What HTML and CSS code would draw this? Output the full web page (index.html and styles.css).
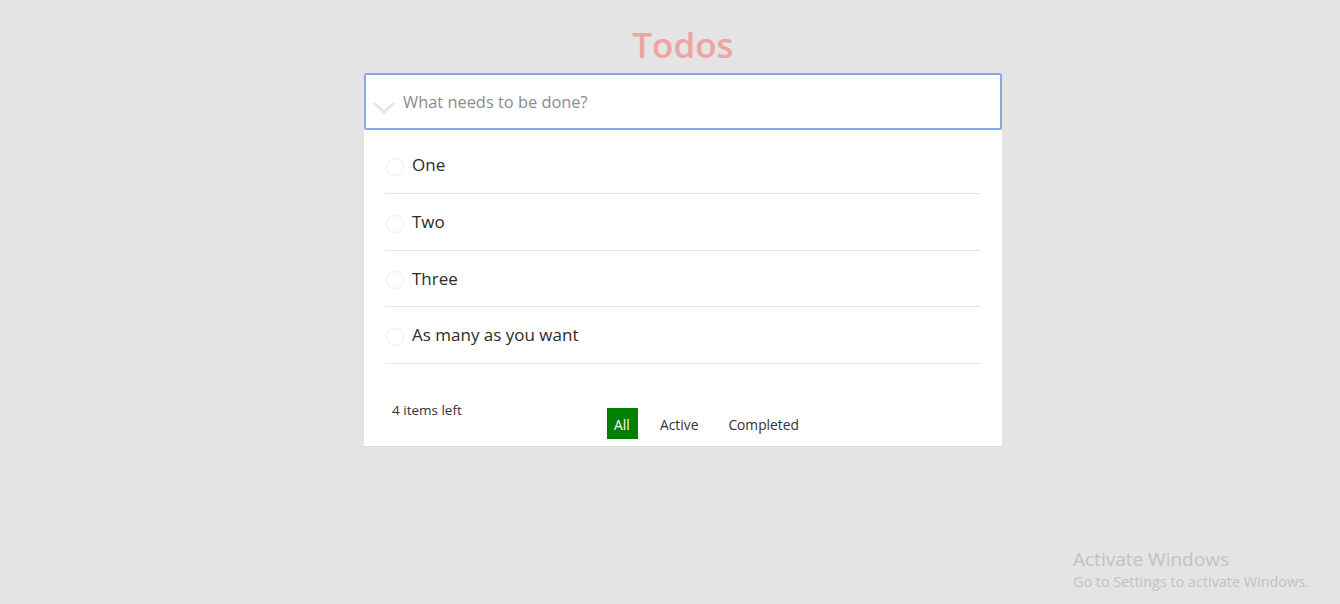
FILE: index.html
```html
<!DOCTYPE html>
<html lang="en">
<head>
<meta charset="utf-8">
<title>Todos</title>
<link rel="stylesheet" href="styles.css">
</head>
<body>
<main class="app">
  <h1 class="title">Todos</h1>
  <section class="card">
    <div class="entry">
      <svg class="toggle-all" width="24" height="16" viewBox="0 0 24 16"><path d="M2 3 L12 12 L22 3" fill="none" stroke="#e6e6e6" stroke-width="3"/></svg>
      <input class="new-todo" type="text" placeholder="What needs to be done?">
    </div>
    <ul class="list">
      <li class="item"><span class="check"></span><span class="label">One</span></li>
      <li class="item"><span class="check"></span><span class="label">Two</span></li>
      <li class="item short"><span class="check"></span><span class="label">Three</span></li>
      <li class="item"><span class="check"></span><span class="label">As many as you want</span></li>
    </ul>
    <footer class="footer">
      <span class="count">4 items left</span>
      <div class="filters">
        <a class="filter selected">All</a>
        <a class="filter">Active</a>
        <a class="filter">Completed</a>
      </div>
    </footer>
  </section>
</main>
<div class="watermark">
  <div class="wm-title">Activate Windows</div>
  <div class="wm-sub">Go to Settings to activate Windows.</div>
</div>
</body>
</html>
```
FILE: styles.css
```css
html, body {
  margin: 0;
  height: 100%;
}
body {
  background: #e4e4e4;
  font-family: "Open Sans", "Noto Sans", sans-serif;
  color: #333;
  overflow: hidden;
}
.app {
  width: 638px;
  margin: 0 auto;
  padding-left: 26px;
}
.title {
  margin: 0;
  padding-top: 22px;
  height: 73px;
  box-sizing: border-box;
  text-align: center;
  font-size: 35px;
  font-weight: 600;
  line-height: 46px;
  color: #efa3a3;
}
.card {
  background: #fff;
  border-bottom: 1px solid #d9d9d9;
}
.entry {
  display: flex;
  align-items: center;
  height: 57px;
  box-sizing: border-box;
  border: 2px solid #87a8ea;
  border-radius: 2px;
  background: #fff;
}
.toggle-all {
  margin-left: 6px;
  margin-top: 12px;
  flex: none;
}
.new-todo {
  flex: 1;
  border: none;
  outline: none;
  margin-left: 7px;
  padding: 0;
  font-family: inherit;
  font-size: 16.4px;
  color: #333;
  background: transparent;
}
.new-todo::placeholder {
  color: #8c8c8c;
}
.list {
  list-style: none;
  margin: 7px 22px 0;
  padding: 0;
}
.item {
  display: flex;
  align-items: center;
  height: 57px;
  border-bottom: 1px solid #e3e3e3;
  padding-bottom: 1px;
  box-sizing: border-box;
}
.item.short {
  height: 56px;
}
.check {
  width: 16px;
  height: 16px;
  border: 1px solid #ececec;
  border-radius: 50%;
  margin-top: 4px;
  flex: none;
}
.label {
  margin-left: 8px;
  font-size: 17px;
  color: #2b2b2b;
}
.footer {
  display: flex;
  height: 82px;
  padding-left: 28px;
  box-sizing: border-box;
}
.count {
  flex: 0 0 215px;
  font-size: 13.5px;
  margin-top: 37px;
  color: #333;
}
.filters {
  display: flex;
  align-self: flex-end;
  margin-bottom: 7px;
}
.filter {
  display: block;
  padding: 0 8px;
  height: 31px;
  line-height: 33px;
  font-size: 13.8px;
  color: #333;
}
.filter + .filter {
  margin-left: 14px;
}
.filter.selected {
  background: #008000;
  color: #fff;
  padding: 0 7px;
  min-width: 17px;
}
.watermark {
  position: absolute;
  left: 1073px;
  top: 546px;
  color: #c2c2c2;
}
.wm-title {
  font-size: 19px;
  line-height: 26px;
}
.wm-sub {
  font-size: 14.4px;
  line-height: 20px;
}
```
